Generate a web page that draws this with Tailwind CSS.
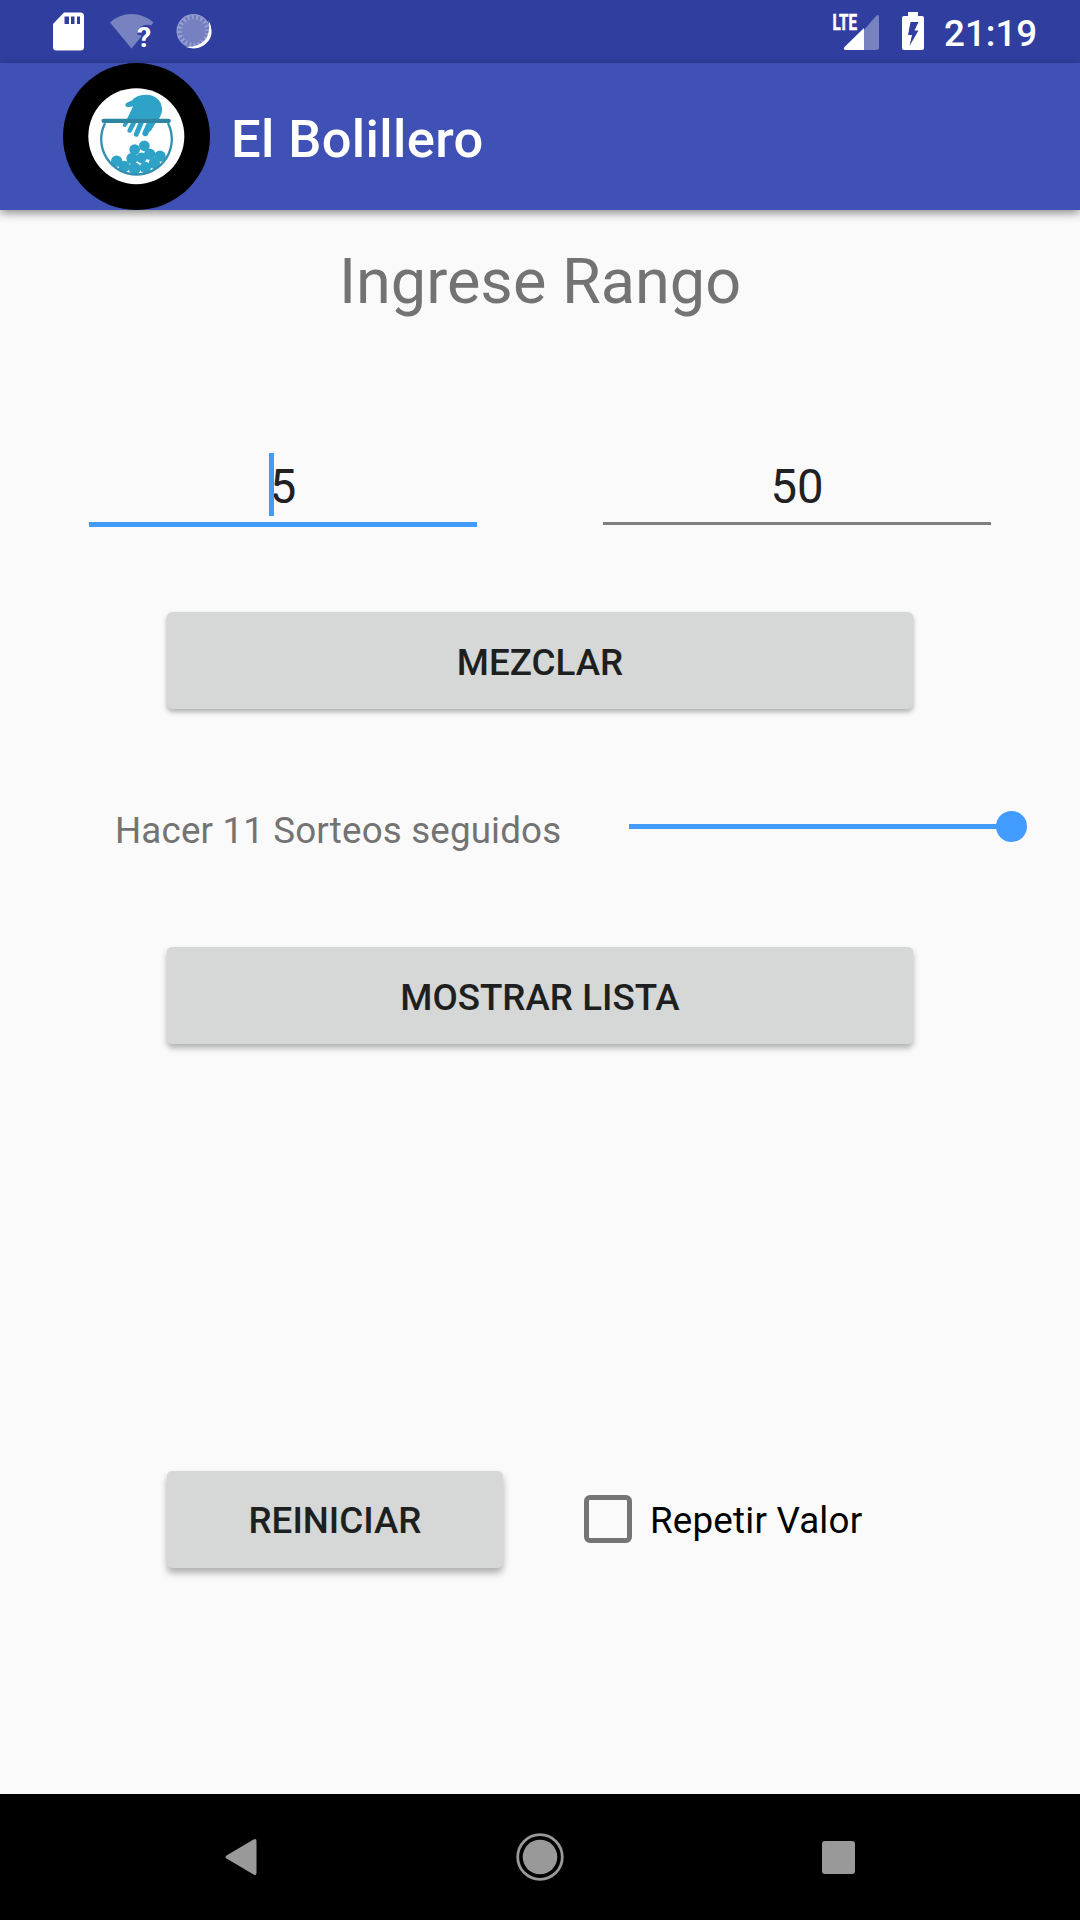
<!DOCTYPE html>
<html lang="es">
<head>
    <meta charset="UTF-8">
    <meta name="viewport" content="width=device-width, initial-scale=1.0">
    <title>El Bolillero</title>
    <script src="https://cdn.jsdelivr.net/npm/@tailwindcss/browser@4"></script>
</head>
<body class="bg-[#fafafa] font-['Roboto',sans-serif] text-[36.75px] leading-[43px]">
    <div class="flex flex-col w-[1080px] h-[1920px] overflow-hidden">

        <!-- Barra de estado -->
        <div class="flex justify-between h-[63px] shrink-0 bg-[#303f9f] pl-[52px] pr-[41px]">
            <div class="flex">
                <!-- Tarjeta SD -->
                <svg class="w-[33px] h-[63px]" viewBox="0 0 33 63">
                    <path fill="#fff" fill-rule="evenodd" d="M12 12.500H28.500Q32 12.500 32 16V47Q32 50.500 28.500 50.500H4.500Q1 50.500 1 47V24ZM12.500 16.500V24H17V16.500ZM19 16.500V24H22.500V16.500ZM25 16.500V24H28V16.500Z"/>
                </svg>
                <!-- Wifi sin conexión -->
                <svg class="w-[44px] h-[63px] ml-[25px]" viewBox="0 0 44 63">
                    <path fill="#fff" fill-opacity=".35" d="M0 22.500Q9 14 21.500 14T43.500 22.500L41 25.500Q36 23.500 31 26.500Q27 29.500 27.500 35H31.500L31 37L21.500 48.500Z"/>
                    <text x="27" y="47" fill="#fff" font-size="28.500" font-weight="700" font-family="Roboto">?</text>
                </svg>
                <!-- Sincronización -->
                <svg class="w-[38px] h-[63px] ml-[21px]" viewBox="0 0 38 63">
                    <circle cx="18.500" cy="31" r="17" fill="#959dd0"/>
                    <circle cx="18.500" cy="31" r="14" fill="none" stroke="#6f79bd" stroke-width="4" stroke-dasharray="2 2.400"/>
                    <circle cx="18.500" cy="31" r="12" fill="#7780c1"/>
                    <path fill="#fff" d="M33.500 20Q40 33 33 41.500Q24 51.500 11 47Q23 47.500 30 40Q36 32 33.500 20Z"/>
                </svg>
            </div>
            <div class="flex">
                <!-- Señal LTE -->
                <svg class="w-[48px] h-[63px]" viewBox="0 0 48 63">
                    <path fill="#fff" fill-opacity=".35" d="M31 31L44.500 15.500Q46.500 14 47 16.500V47.500Q47 50 44.500 50H31Z"/>
                    <path fill="#fff" d="M32 28V50H14Q10.500 49.500 12.500 47Z"/>
                    <text x="0.500" y="29.500" fill="#fff" stroke="#fff" stroke-width=".6" font-size="22" font-weight="700" font-family="Roboto" textLength="24.500" lengthAdjust="spacingAndGlyphs">LTE</text>
                </svg>
                <!-- Batería cargando -->
                <svg class="w-[22px] h-[63px] ml-[22px]" viewBox="0 0 22 63">
                    <path fill="#fff" fill-rule="evenodd" d="M6 12H16V16H20Q22 16 22 18V48Q22 50 20 50H2Q0 50 0 48V18Q0 16 2 16H6ZM8.500 22L6 35H10L7.500 46L16.500 30.500H12.500L16.500 22Z"/>
                </svg>
                <span class="pt-[12px] pl-[20px] w-[115px] text-white font-medium whitespace-nowrap">21:19</span>
            </div>
        </div>

        <!-- Barra de la aplicación -->
        <header class="flex items-center h-[147px] shrink-0 bg-[#3f51b5] pl-[63px] shadow-[0_3px_9px_rgba(0,0,0,0.45)]">
            <svg class="w-[147px] h-[147px] shrink-0" viewBox="39 20.500 441 441">
                <circle cx="259.500" cy="241" r="220.500" fill="#000"/>
                <circle cx="259" cy="240" r="144" fill="#fff"/>
                <!-- Bolillas -->
                <g fill="#2fa3c7">
                    <circle cx="200" cy="315" r="17"/>
                    <circle cx="254" cy="280" r="16"/>
                    <circle cx="283" cy="269" r="16"/>
                    <circle cx="246" cy="307" r="17"/>
                    <circle cx="274" cy="305" r="16"/>
                    <circle cx="299" cy="294" r="17"/>
                    <circle cx="330" cy="300" r="17"/>
                    <circle cx="223" cy="331" r="17"/>
                    <circle cx="254" cy="337" r="18"/>
                    <circle cx="286" cy="334" r="17"/>
                    <circle cx="313" cy="321" r="17"/>
                </g>
                <path fill="none" stroke="#348fb0" stroke-width="7" d="M165 201A106 106 0 1 0 354 201"/>
                <!-- Mano -->
                <path fill="#2fa3c7" d="M228 141Q236 136 246 133Q254 122 270 118Q288 114 305 118Q333 128 336 154Q338 168 329 184L322 198H226L242 166L249 150L234 153Q222 150 228 141Z"/>
                <g fill="none" stroke="#2fa3c7" stroke-linecap="round">
                    <path stroke-width="11" d="M232 196L224 207"/>
                    <path stroke-width="14" d="M254 194L239 223"/>
                    <path stroke-width="15" d="M276 194L259 234"/>
                    <path stroke-width="18" d="M305 190L286 231"/>
                    <path stroke-width="12" d="M316 190L298 220"/>
                </g>
                <path stroke="#2f84a1" stroke-width="13" stroke-linecap="round" d="M161 194H356"/>
            </svg>
            <h1 class="pl-[21px] pt-[5px] text-[52.5px] leading-[62px] tracking-[0.35px] font-medium text-white">El Bolillero</h1>
        </header>

        <main class="flex flex-col grow">
            <h2 class="mt-[35px] text-center text-[63px] leading-[74px] text-[#737373]">Ingrese Rango</h2>

            <!-- Rango -->
            <div class="flex justify-between mt-[134px] pl-[89px] pr-[89px] h-[74px] text-[47.25px] leading-[63px] text-[#212121]">
                <div class="flex justify-center w-[388px] h-full border-b-[5px] border-[#429bf7]">
                    <span class="relative pt-[3px]">5<span class="absolute left-[-1px] top-0 w-[5px] h-[63px] bg-[#429bf7]"></span></span>
                </div>
                <div class="w-[388px] h-[72px] pt-[3px] text-center border-b-[3px] border-[#7f7f7f]">50</div>
            </div>

            <button class="mt-[85px] ml-[167px] w-[746px] h-[97px] rounded-[5px] bg-[#d6d7d7] shadow-[0_3px_5px_rgba(0,0,0,0.3)] pt-[4px] font-medium text-[#1e1f1f]">MEZCLAR</button>

            <!-- Cantidad de sorteos -->
            <div class="flex items-center mt-[95px] h-[48px]">
                <span class="ml-[115px] w-[514px] pt-[5px] tracking-[0.15px] text-[#737373]">Hacer 11 Sorteos seguidos</span>
                <div class="flex items-center -mt-[3px]">
                    <div class="w-[370px] h-[5px] bg-[#429bf7]"></div>
                    <div class="-ml-[3px] size-[31px] rounded-full bg-[#429bfe]"></div>
                </div>
            </div>

            <button class="mt-[95px] ml-[167px] w-[746px] h-[97px] rounded-[5px] bg-[#d6d7d7] shadow-[0_4px_6px_rgba(0,0,0,0.3)] pt-[4px] font-medium text-[#1e1f1f]">MOSTRAR LISTA</button>

            <div class="flex items-center mt-[427px] pl-[167px]">
                <button class="w-[336px] h-[97px] rounded-[5px] bg-[#d6d7d7] shadow-[0_5px_7px_rgba(0,0,0,0.3)] pt-[2px] font-medium text-[#1e1f1f]">REINICIAR</button>
                <label class="flex items-center ml-[81px]">
                    <span class="size-[48px] -mt-[2px] rounded-[6px] border-[5px] border-[#757575]"></span>
                    <span class="ml-[18px] pt-[2px] tracking-[0.2px] text-black">Repetir Valor</span>
                </label>
            </div>
        </main>

        <!-- Barra de navegación -->
        <nav class="flex items-center h-[126px] shrink-0 bg-black pl-[225px]">
            <svg class="w-[32px] h-[38px]" viewBox="0 0 32 38">
                <path fill="#999" d="M1.500 17.500L28.500 1.500Q31.500 0 31.500 3V35Q31.500 38 28.500 36.500L1.500 20.500Q-.5 19 1.500 17.500Z"/>
            </svg>
            <svg class="w-[48px] h-[48px] -mt-[1px] ml-[258.5px]" viewBox="0 0 48 48">
                <circle cx="24" cy="24" r="22.300" fill="none" stroke="#999" stroke-width="2.800"/>
                <circle cx="24" cy="24" r="17.300" fill="#999"/>
            </svg>
            <div class="ml-[258px] w-[33px] h-[33px] rounded-[3px] bg-[#999]"></div>
        </nav>
    </div>
</body>
</html>
